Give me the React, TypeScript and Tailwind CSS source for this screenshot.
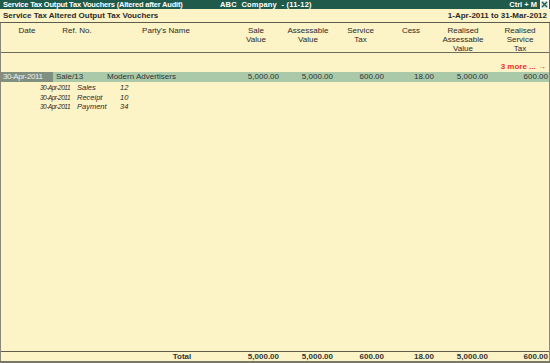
const cols = 'grid grid-cols-[52px_48px_130px_50px_54px_51px_50px_54px_60px]'

function CloseBox() {
  return (
    <svg width="9" height="9" viewBox="0 0 9 9" className="block">
      <rect x="0.5" y="0.5" width="8" height="8" fill="#d8e4dc" stroke="#ffffff" />
      <path d="M2 2 L7 7 M7 2 L2 7" stroke="#1f5a4a" strokeWidth="1.3" />
    </svg>
  )
}

const subRows = [
  { date: '30-Apr-2011', type: 'Sales', no: '12' },
  { date: '30-Apr-2011', type: 'Receipt', no: '10' },
  { date: '30-Apr-2011', type: 'Payment', no: '34' },
]

export default function App() {
  return (
    <div className="w-[550px] h-[363px] bg-[#fcf3c6] flex flex-col font-['Liberation_Sans',Arial,sans-serif] text-[8px] leading-[9px] text-[#2a2a2a] overflow-hidden">
      {/* title bar */}
      <div className="h-[9px] bg-[#1f5a4a] text-white font-bold text-[7.5px] leading-[9px] flex items-center pl-[3px] pr-[1px] tracking-[-0.2px]">
        <span className="w-[217px] whitespace-nowrap">Service Tax Output Tax Vouchers (Altered after Audit)</span>
        <span className="flex-1 whitespace-nowrap tracking-[0.2px]">ABC&nbsp; Company&nbsp; - (11-12)</span>
        <span className="mr-[3px] whitespace-nowrap tracking-[0px]">Ctrl + M</span>
        <CloseBox />
      </div>

      {/* sub header */}
      <div className="h-[14px] flex items-center justify-between px-[3px] font-bold border-b border-[#5e5c4c]">
        <span>Service Tax Altered Output Tax Vouchers</span>
        <span>1-Apr-2011 to 31-Mar-2012</span>
      </div>

      <div className="flex-1 flex flex-col border-l border-r border-[#8a887a]">
        {/* column headers */}
        <div className={`${cols} h-[30px] pt-[3px] border-b border-[#6e6c5c] text-center`}>
          <div>Date</div>
          <div>Ref. No.</div>
          <div>Party's Name</div>
          <div>Sale<br />Value</div>
          <div>Assessable<br />Value</div>
          <div>Service<br />Tax</div>
          <div>Cess</div>
          <div>Realised<br />Assessable<br />Value</div>
          <div>Realised<br />Service<br />Tax</div>
        </div>

        {/* body */}
        <div className="flex-1 flex flex-col">
          <div className="h-[10px] mt-[9px] pr-[3px] text-right font-bold text-[#e8322a] leading-[10px]">3 more ... →</div>
          <div className={`${cols} h-[10px] leading-[10px] bg-[#a9c9a9] text-[#333]`}>
            <div className="bg-[#7f8f80] text-[#eeeeee] pl-[2px] tracking-[-0.4px]">30-Apr-2011</div>
            <div className="pl-[3px]">Sale/13</div>
            <div className="pl-[6px]">Modern Advertisers</div>
            <div className="text-right pr-[2px]">5,000.00</div>
            <div className="text-right pr-[2px]">5,000.00</div>
            <div className="text-right pr-[2px]">600.00</div>
            <div className="text-right pr-[2px]">18.00</div>
            <div className="text-right pr-[2px]">5,000.00</div>
            <div className="text-right pr-[2px]">600.00</div>
          </div>
          <div className="flex flex-col pt-[1px] italic">
            {subRows.map((r) => (
              <div key={r.type} className="flex items-center h-[9.5px] pl-[39px]">
                <span className="w-[37px] text-[6.5px] tracking-[-0.5px]">{r.date}</span>
                <span className="w-[43px] text-[7.5px]">{r.type}</span>
                <span className="text-[7.5px]">{r.no}</span>
              </div>
            ))}
          </div>
        </div>

        {/* total */}
        <div className={`${cols} h-[10px] leading-[10px] border-t border-[#5e5c4c] font-bold text-[#333]`}>
          <div />
          <div />
          <div className="text-center pl-[32px]">Total</div>
          <div className="text-right pr-[2px]">5,000.00</div>
          <div className="text-right pr-[2px]">5,000.00</div>
          <div className="text-right pr-[2px]">600.00</div>
          <div className="text-right pr-[2px]">18.00</div>
          <div className="text-right pr-[2px]">5,000.00</div>
          <div className="text-right pr-[2px]">600.00</div>
        </div>
      </div>
      <div className="h-[2px] bg-[#77776a]" />
    </div>
  )
}
